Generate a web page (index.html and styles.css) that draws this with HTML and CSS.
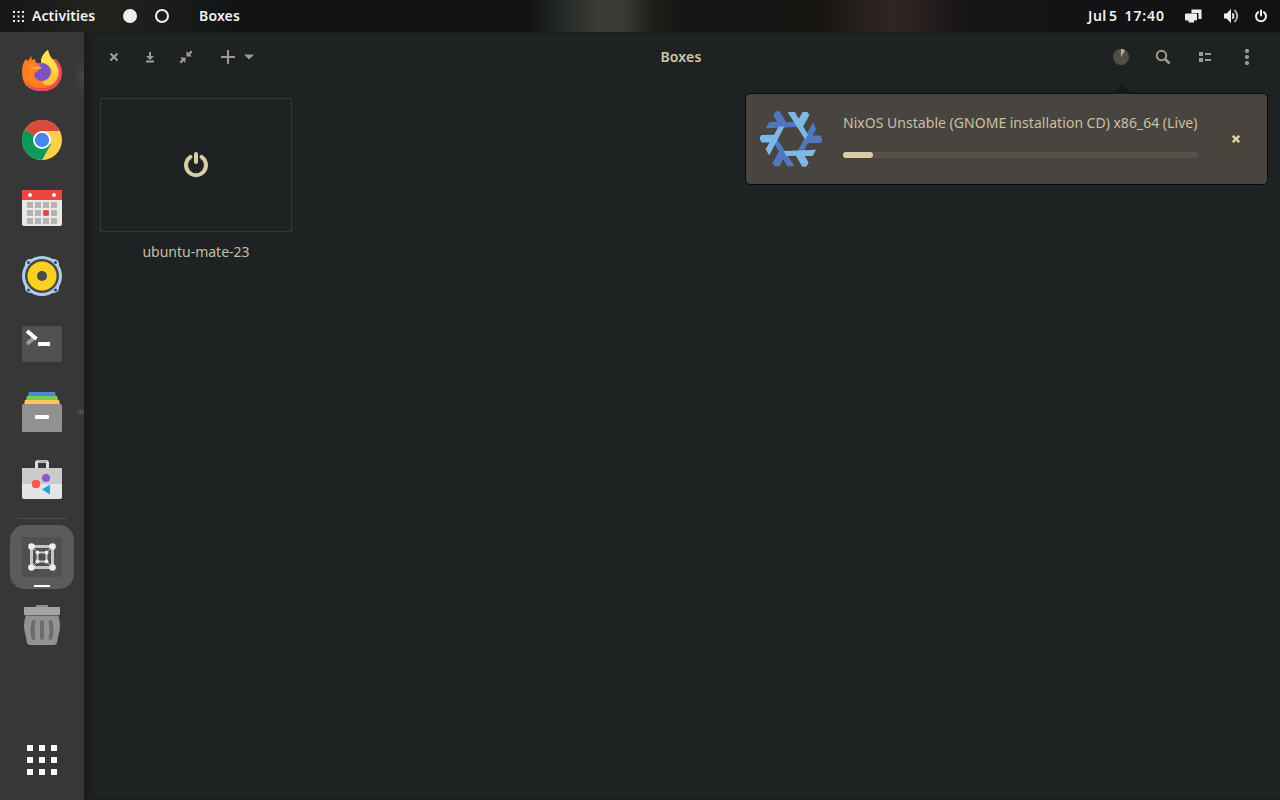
FILE: index.html
```html
<!DOCTYPE html>
<html lang="en">
<head>
<meta charset="utf-8">
<title>Boxes</title>
<link rel="stylesheet" href="styles.css">
</head>
<body>
<div class="desktop">
  <header class="topbar">
    <div class="topbar-left">
      <svg class="dots" width="11" height="11" viewBox="0 0 11 11" fill="#eee"><path d="M0 0h2v2H0zM4.500 0h2v2h-2zM9 0h2v2H9zM0 4.500h2v2H0zM4.500 4.500h2v2h-2zM9 4.500h2v2H9zM0 9h2v2H0zM4.500 9h2v2h-2zM9 9h2v2H9z"/></svg>
      <span class="activities">Activities</span>
      <span class="workspace workspace-active"></span>
      <span class="workspace"></span>
      <span class="app-name">Boxes</span>
    </div>
    <div class="topbar-right">
      <span class="clock"><span class="date">Jul 5</span><span class="time">17:40</span></span>
      <svg class="net" width="18" height="16" viewBox="0 0 18 16"><path d="M6.500 1.500h10V11h-3V5h-7z" fill="#eee"/><rect x="0" y="5.500" width="12" height="7" rx="1" fill="#eee"/><path d="M3.500 12h5.500v2.500H3.500z" fill="#eee"/></svg>
      <svg class="volume" width="16" height="16" viewBox="0 0 16 16"><path d="M1 5.500h2.500L8 1v14l-4.500-4.500H1z" fill="#eee"/><path d="M9.500 5.200q2 2.800 0 5.600" fill="none" stroke="#eee" stroke-width="1.800"/><path d="M11.500 2q5.500 6 0 12" fill="none" stroke="#bbb" stroke-width="1.800"/></svg>
      <svg width="14" height="14" viewBox="0 0 14 14" fill="none" stroke="#eee" stroke-width="2" stroke-linecap="round"><path d="M4.200 3.200a5 5 0 1 0 5.600 0M7 1.500v5"/></svg>
    </div>
  </header>
  <div class="workspace-area">
    <nav class="dock">
      <div class="dock-item"><svg class="firefox" width="40" height="42" viewBox="0 0 40 42">
        <path d="M20 9h14q6 6 6 13 0 12-10 17z" fill="#f4465c"/>
        <path d="M0 22Q0 13 4 9l2 2 3-5 1 4 3-1 1 4 5 3 16 17q-5 8-15 8Q0 41 0 22z" fill="#ff7b1d"/>
        <path d="M3 31q7 8 18 7 11-1 18-11-3 14-19 14Q8 41 3 31z" fill="#f4465c"/>
        <path d="M19 11q1-7 7-11 1 6 6 11 9 11 1 21-5 5-12 2z" fill="#ffc63c"/>
        <path d="M19 11q1-7 7-11 1 6 6 11 4 7 2 13-5-9-15-12z" fill="#ffe14c"/>
        <circle cx="20" cy="22" r="9" fill="#7a54c4"/>
        <path d="M12 17q0-5 6-4h6q-8 1-9 8z" fill="#a657d1"/>
        <path d="M6 14q5-2 8-1l6 5-5 3q-3 2-3 5 1 6 8 7-10 3-14-4Q2 21 6 14z" fill="#ff8320"/>
        <path d="M8 18q5-2 11-1l-3 2z" fill="#ffb33b"/>
      </svg></div>
      <div class="dock-item"><svg width="40" height="40" viewBox="0 0 40 40">
        <circle cx="20" cy="20" r="20" fill="#fbd147"/>
        <path d="M20 20 3 9.500A20 20 0 0 1 37.800 11H20z" fill="#d84a3b"/>
        <path d="M20 20 3 9.500A20 20 0 0 0 20 40l9-16z" fill="#0d9a58"/>
        <circle cx="20" cy="20" r="9" fill="#fff"/><circle cx="20" cy="20" r="7.200" fill="#4687ed"/>
      </svg></div>
      <div class="dock-item"><svg width="40" height="40" viewBox="0 0 40 40">
        <rect y="2" width="40" height="36" rx="2" fill="#e8e8e6"/>
        <path d="M0 12V4q0-2 2-2h36q2 0 2 2v8z" fill="#ee463f"/>
        <circle cx="8" cy="7" r="2" fill="#fff"/><circle cx="32" cy="7" r="2" fill="#fff"/>
        <path d="M5 14h6v6H5zM13 14h6v6h-6zM21 14h6v6h-6zM29 14h6v6h-6zM5 22h6v6H5zM13 22h6v6h-6zM21 22h6v6h-6zM29 22h6v6h-6zM5 30h6v6H5zM13 30h6v6h-6zM21 30h6v6h-6zM29 30h6v6h-6z" fill="#b4b5b2"/>
        <circle cx="24" cy="25" r="3" fill="#e6443e"/>
      </svg></div>
      <div class="dock-item"><svg width="40" height="40" viewBox="0 0 40 40">
        <rect x="3" y="3" width="34" height="34" rx="5" fill="#afccef"/><circle cx="20" cy="20" r="20" fill="#afccef"/>
        <circle cx="20" cy="20" r="17" fill="#4a4940"/><circle cx="20" cy="20" r="14.500" fill="#fbd023"/><circle cx="20" cy="20" r="5" fill="#494a49"/>
        <g fill="#34465c"><circle cx="6.500" cy="6.500" r="1.500"/><circle cx="33.500" cy="6.500" r="1.500"/><circle cx="6.500" cy="34" r="1.500"/><circle cx="33.500" cy="34" r="1.500"/></g>
      </svg></div>
      <div class="dock-item"><svg width="40" height="40" viewBox="0 0 40 40">
        <rect y="2" width="40" height="36" rx="2" fill="#515151"/>
        <path d="m5 20 8-7" stroke="#999" stroke-width="4" fill="none"/><path d="m5 7 9.500 8" stroke="#fff" stroke-width="4"/><path d="M16 18h12v4H16z" fill="#fff"/>
      </svg></div>
      <div class="dock-item"><svg width="40" height="40" viewBox="0 0 40 40">
        <path d="M7 0h26l1 4H6z" fill="#4d88d0"/><path d="M5 4h30l1 4H4z" fill="#78cd4c"/><path d="M3 8h34l1 5H2z" fill="#f7c95b"/>
        <rect y="12" width="40" height="28" rx="1.500" fill="#919191"/><rect x="13" y="23" width="14" height="4" rx="1" fill="#fff"/>
      </svg></div>
      <div class="dock-item"><svg width="40" height="40" viewBox="0 0 40 40">
        <path d="M14.500 9V3q0-1.500 2-1.500h7q2 0 2 1.500v6" fill="none" stroke="#ddd" stroke-width="3"/><path d="M16 1.500h8" stroke="#aaa" stroke-width="2"/>
        <path d="M0 8h40v29q0 2-2 2H2q-2 0-2-2z" fill="#e5e5e5"/><path d="M0 8h40v16H0z" fill="#cbcbcb"/>
        <circle cx="24" cy="18" r="4" fill="#9453d5"/><rect x="10" y="20" width="8" height="8" rx="3" fill="#f8554f"/><path d="m20 29.500 8-5v10z" fill="#21a4e5"/>
      </svg></div>
      <div class="dock-rule"></div>
      <div class="dock-item dock-item-active"><svg width="40" height="40" viewBox="0 0 40 40">
        <rect width="40" height="40" rx="2" fill="#505050"/>
        <g fill="none" stroke="#c6c6c6"><path d="M9.500 9.500h21v21h-21z" stroke-width="3"/><path d="M15.500 15.500h9v9h-9z" stroke-width="2"/><path d="m9.500 9.500 6 6m15-6-6 6m6 15-6-6m-15 6 6-6" stroke-width="1"/></g>
        <g fill="#eee"><circle cx="9.500" cy="9.500" r="3.300"/><circle cx="30.500" cy="9.500" r="3.300"/><circle cx="9.500" cy="30.500" r="3.300"/><circle cx="30.500" cy="30.500" r="3.300"/><circle cx="15.500" cy="15.500" r="2"/><circle cx="24.500" cy="15.500" r="2"/><circle cx="15.500" cy="24.500" r="2"/><circle cx="24.500" cy="24.500" r="2"/></g>
      </svg><span class="running"></span></div>
      <div class="dock-item"><svg width="40" height="40" viewBox="0 0 40 40">
        <path d="M14 0h12v3H14z" fill="#8c8c8c"/><path d="M4 10h32q4 10 0 22l-1 6q-1 2-3 2H8q-2 0-3-2l-1-6Q0 20 4 10z" fill="#929292"/><rect x="2" y="2" width="36" height="8" rx="1" fill="#a4a4a4"/><path d="M3 10.500h34" stroke="#666"/>
        <path d="M11.500 17q-2 8 0 16m8.500-16v16m8.500-16q2 8 0 16" fill="none" stroke="#6c6c6c" stroke-width="4" stroke-linecap="round"/>
      </svg></div>
      <div class="dock-item app-grid"><svg width="30" height="30" viewBox="0 0 30 30" fill="#f7f7f7"><path d="M0 0h6v6H0zM12 0h6v6h-6zM24 0h6v6h-6zM0 12h6v6H0zM12 12h6v6h-6zM24 12h6v6h-6zM0 24h6v6H0zM12 24h6v6h-6zM24 24h6v6h-6z"/></svg></div>
    </nav>
    <main class="window">
      <div class="headerbar">
        <div class="controls">
          <svg width="16" height="16" viewBox="0 0 16 16" stroke="#9e9b8d" stroke-width="2.200"><path d="m4.500 4.500 7 7m0-7-7 7"/></svg>
          <svg width="16" height="16" viewBox="0 0 16 16" fill="#9e9b8d"><path d="M7 3h2v4h3l-4 4-4-4h3zM4 11.500h8v2H4z"/></svg>
          <svg width="16" height="16" viewBox="0 0 16 16" fill="#9e9b8d"><path d="M8.500 2v5.500H14l-2-2 2.500-2.300-1.700-1.700L10.500 4zM7.500 14V8.500H2l2 2-2.500 2.300 1.700 1.700L5.500 12z"/></svg>
          <div class="new-box">
            <svg width="16" height="16" viewBox="0 0 16 16" fill="none" stroke="#9e9b8d" stroke-width="2"><path d="M8 1v14M1 8h14"/></svg>
            <svg width="10" height="6" viewBox="0 0 10 6" fill="#9e9b8d"><path d="M0 .5h10l-5 5z"/></svg>
          </div>
        </div>
        <span class="title">Boxes</span>
        <div class="tools">
          <svg width="16" height="16" viewBox="0 0 16 16"><circle cx="8" cy="8" r="8" fill="#504e46"/><path d="M8 8V0q2.300 0 4 1.200z" fill="#b8b19b"/></svg>
          <svg width="16" height="16" viewBox="0 0 16 16" fill="none" stroke="#9e9b8d" stroke-width="2"><circle cx="6.500" cy="6.500" r="4.700"/><path d="m10 10 4.500 4.500" stroke-width="2.500"/></svg>
          <svg width="16" height="16" viewBox="0 0 16 16" fill="#9e9b8d"><path d="M2 3h4v4H2zM2 9h4v4H2zM8 4h6v2H8zM8 10h6v2H8z"/></svg>
          <svg width="16" height="16" viewBox="0 0 16 16" fill="#9e9b8d"><circle cx="8" cy="2" r="2.100"/><circle cx="8" cy="8" r="2.100"/><circle cx="8" cy="14" r="2.100"/></svg>
        </div>
      </div>
      <section class="collection">
        <div class="machine">
          <div class="thumbnail"><svg width="28" height="30" viewBox="0 0 28 30" fill="none" stroke="#d9cda4" stroke-width="4" stroke-linecap="round"><path d="M8.500 6.800a10 10 0 1 0 11 0M14 4v8"/></svg></div>
          <span class="machine-name">ubuntu-mate-23</span>
        </div>
      </section>
      <div class="popover">
        <svg class="popover-arrow" width="20" height="10" viewBox="0 0 20 10"><path d="m0 10 10-9 10 9z" fill="#151718"/></svg>
        <svg class="nix" width="62" height="62" viewBox="-32 -32 64 64">
          <defs><path id="arm" d="M-3.500-28H4l4 7L12-28h5l2 3.500-6.500 11.500L17.500-4.600l-3 5z"/></defs>
          <g fill="#5077bd"><use href="#arm" transform="rotate(-60)"/><use href="#arm" transform="rotate(60)"/><use href="#arm" transform="rotate(180)"/></g>
          <g fill="#7eb8e7"><use href="#arm"/><use href="#arm" transform="rotate(120)"/><use href="#arm" transform="rotate(240)"/></g>
        </svg>
        <div class="download">
          <span class="download-name">NixOS Unstable (GNOME installation CD) x86_64 (Live)</span>
          <div class="progress"><div class="progress-fill"></div></div>
        </div>
        <div class="cancel"><svg width="8" height="8" viewBox="0 0 8 8" stroke="#ddd2b2" stroke-width="2.300"><path d="m.8.800 6.400 6.400m0-6.400L.8 7.200"/></svg></div>
      </div>
    </main>
  </div>
</div>
</body>
</html>
```
FILE: styles.css
```css
* { box-sizing: border-box; }
body { margin: 0; font-family: "Noto Sans", sans-serif; font-size: 14px; line-height: 20px; }
svg { display: block; flex: none; }
span { white-space: nowrap; }
.desktop { width: 1280px; height: 800px; display: flex; flex-direction: column; overflow: hidden; background: #1e2222; }
.topbar {
  height: 32px; flex: none; display: flex; justify-content: space-between; align-items: center;
  padding: 0 12px 0 13px; color: #f2f2f2; font-weight: 600;
  background: linear-gradient(90deg, #151514 0, #22231e 90px, #1d1e1b 150px, #111214 240px, #111314 530px, #242825 560px, #3b3c36 600px, #3a3a34 625px, #1d1c19 655px, #131413 690px, #171512 820px, #302623 890px, #29201f 920px, #151315 970px, #111113 1280px);
}
.topbar-left, .topbar-right { display: flex; align-items: center; }
.activities { margin-left: 8px; width: 91px; letter-spacing: 0.080px; }
.workspace { width: 14px; height: 14px; border: 2px solid #eee; border-radius: 50%; margin-right: 18px; }
.workspace-active { background: #eee; }
.app-name { margin-left: 12px; letter-spacing: 0.150px; }
.clock { display: flex; gap: 7px; margin-right: 21px; }
.date { letter-spacing: 0.500px; word-spacing: -2px; }
.time { letter-spacing: 0.900px; margin-right: -0.900px; }
.net { margin-right: 20px; }
.volume { margin-right: 15px; }
.workspace-area { flex: 1; display: flex; min-height: 0; }
.dock {
  width: 84px; flex: none; display: flex; flex-direction: column; align-items: center; gap: 4px; padding: 8px 0;
  background: radial-gradient(6px 4px at 81px 380px, #505050 0, transparent 100%), radial-gradient(9px 18px at 82px 45px, #454440 0, transparent 100%), #373737;
}
.dock-item { width: 64px; height: 64px; flex: none; display: flex; align-items: center; justify-content: center; }
.firefox { margin-bottom: 2px; }
.dock-rule { width: 50px; height: 1px; flex: none; margin: 2px 0; background: #4b4b4b; }
.dock-item-active { position: relative; border-radius: 15px; background: #5b5b5b; }
.running { position: absolute; bottom: 2px; left: 24px; width: 16px; height: 2px; background: #fff; }
.app-grid { margin-top: auto; }
.window { position: relative; flex: 1; background: #1e2222; box-shadow: inset 3px 0 4px #181b1c; }
.headerbar { height: 50px; display: grid; grid-template-columns: 1fr auto 1fr; align-items: center; padding: 0 24px 0 22px; }
.controls { display: flex; align-items: center; gap: 20px; }
.new-box { display: flex; align-items: center; gap: 8px; margin-left: 6px; }
.title { color: #cfc6ac; font-weight: 600; letter-spacing: 0.200px; }
.tools { display: flex; justify-content: flex-end; gap: 26px; padding-right: 1px; }
.collection { padding: 16px; }
.machine { width: 192px; display: flex; flex-direction: column; align-items: center; gap: 10px; }
.thumbnail { width: 192px; height: 134px; border: 1px solid #343737; display: flex; align-items: center; justify-content: center; }
.machine-name { color: #c6bda4; }
.popover {
  position: absolute; left: 661px; top: 61px; width: 523px; height: 92px; display: flex; align-items: center;
  padding: 0 15px 0 14px; background: #48443f; border: 1px solid #090b0b; border-radius: 5px;
}
.popover-arrow { position: absolute; left: 366px; top: -10px; }
.download { width: 355px; margin: 0 0 8px 21px; display: flex; flex-direction: column; gap: 19px; }
.download-name { color: #cbc0a4; letter-spacing: 0.060px; word-spacing: -0.300px; }
.progress { height: 6px; border-radius: 3px; background: #595149; }
.progress-fill { width: 30px; height: 6px; border-radius: 3px; background: #d9cda5; }
.cancel { margin-left: auto; width: 32px; height: 32px; border-radius: 3px; background: #49433c; display: flex; align-items: center; justify-content: center; }
```
